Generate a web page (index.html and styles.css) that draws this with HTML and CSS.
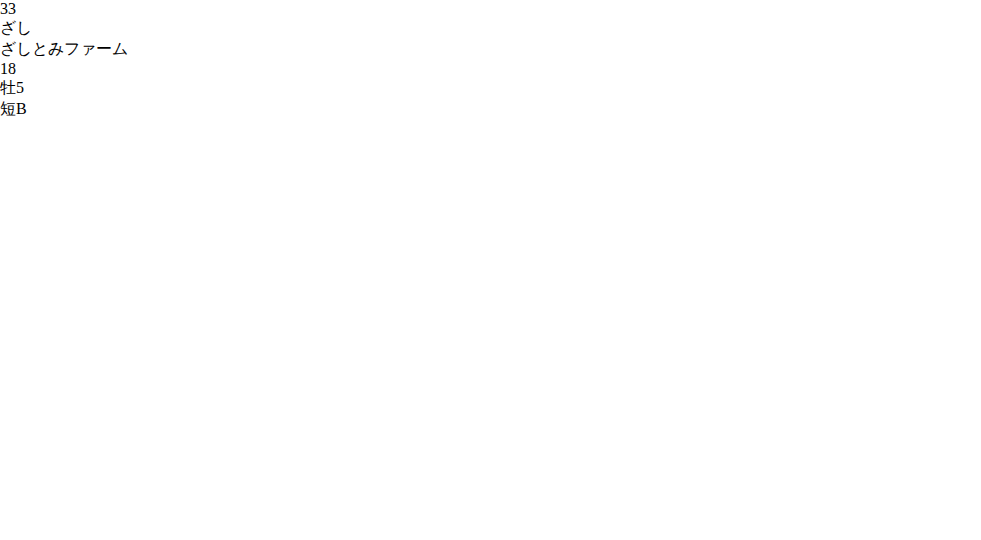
FILE: index.html
```html
<!DOCTYPE html>
<html lang="ja">
<head>
<meta charset="utf-8">
<title>Sheet</title>
<link rel="stylesheet" href="styles.css">
</head>
<body>
<div class="sheet">
  <div class="c num">33</div><div class="c name">ざし</div><div class="c farm">ざしとみファーム</div><div class="c pt">18</div><div class="c st dr db"></div><div class="c horse dr"></div><div class="c sex">牡5</div><div class="c cls db">短B</div>
</div>
</body>
</html>
```
FILE: styles.css
```css
body{margin:0}
```
